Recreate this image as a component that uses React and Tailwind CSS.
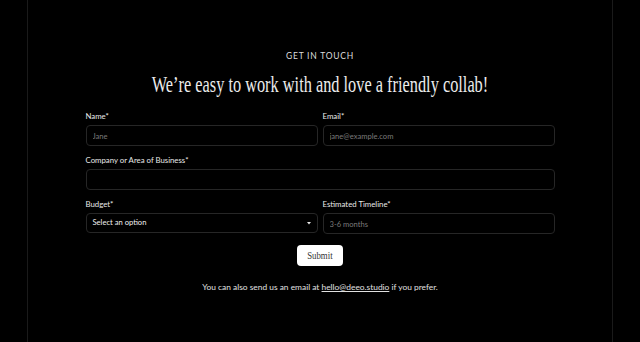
import React from 'react';

const sans = { fontFamily: 'Lato, "Noto Sans", sans-serif' };

function Field({ label, placeholder, className = '' }) {
  return (
    <div className={`flex flex-col ${className}`}>
      <label className="h-[10px] text-[7.8px] leading-[10px] text-[#e8e8e8] mb-[4px]">{label}</label>
      <input
        placeholder={placeholder}
        className="h-[21px] w-full rounded-[4px] border border-[#262626] bg-black px-[6px] text-[7.6px] text-[#ddd] placeholder:text-[#7a7a7a] outline-none"
      />
    </div>
  );
}

function SelectField({ label }) {
  return (
    <div className="flex flex-col">
      <label className="h-[10px] text-[7.8px] leading-[10px] text-[#e8e8e8] mb-[4px]">{label}</label>
      <div className="h-[20px] w-full rounded-[4px] border border-[#262626] bg-black pl-[6px] pr-[6px] flex items-center justify-between">
        <span className="text-[7.6px] text-[#f0f0f0]">Select an option</span>
        <svg width="4" height="3" viewBox="0 0 4 3">
          <path d="M0 0h4L2 2.6z" fill="#e8e8e8" />
        </svg>
      </div>
    </div>
  );
}

export default function App() {
  return (
    <div className="w-full h-[342px] bg-black overflow-hidden" style={sans}>
      <div className="mx-auto w-[586px] h-full border-x border-[#1a1a1a] flex flex-col items-center pt-[51px]">
        <p className="h-[10px] text-[8.5px] leading-[10px] tracking-[0.09em] text-[#dcdcdc]">GET IN TOUCH</p>

        <div className="h-[28px] mt-[10px] flex items-center justify-center">
          <h1
            className="whitespace-nowrap text-[23px] leading-[28px] text-[#ececec] scale-x-[0.71]"
            style={{ fontFamily: '"Liberation Serif", serif' }}
          >
            We’re easy to work with and love a friendly collab!
          </h1>
        </div>

        <form className="w-[469px] mt-[12px] flex flex-col">
          <div className="grid grid-cols-2 gap-x-[5px]">
            <Field label="Name*" placeholder="Jane" />
            <Field label="Email*" placeholder="jane@example.com" />
          </div>
          <Field className="mt-[9px]" label="Company or Area of Business*" placeholder="" />
          <div className="grid grid-cols-2 gap-x-[5px] mt-[9px]">
            <SelectField label="Budget*" />
            <Field label="Estimated Timeline*" placeholder="3-6 months" />
          </div>
          <div className="flex justify-center mt-[11px]">
            <button
              type="button"
              className="w-[46px] h-[21px] rounded-[4px] bg-white flex items-center justify-center"
            >
              <span
                className="text-[11px] text-[#333] scale-x-[0.8]"
                style={{ fontFamily: '"Liberation Serif", serif' }}
              >
                Submit
              </span>
            </button>
          </div>
        </form>

        <p className="mt-[15px] h-[12px] text-[8.4px] leading-[12px] text-[#e0e0e0]">
          You can also send us an email at <a className="underline">hello@deeo.studio</a> if you prefer.
        </p>
      </div>
    </div>
  );
}
